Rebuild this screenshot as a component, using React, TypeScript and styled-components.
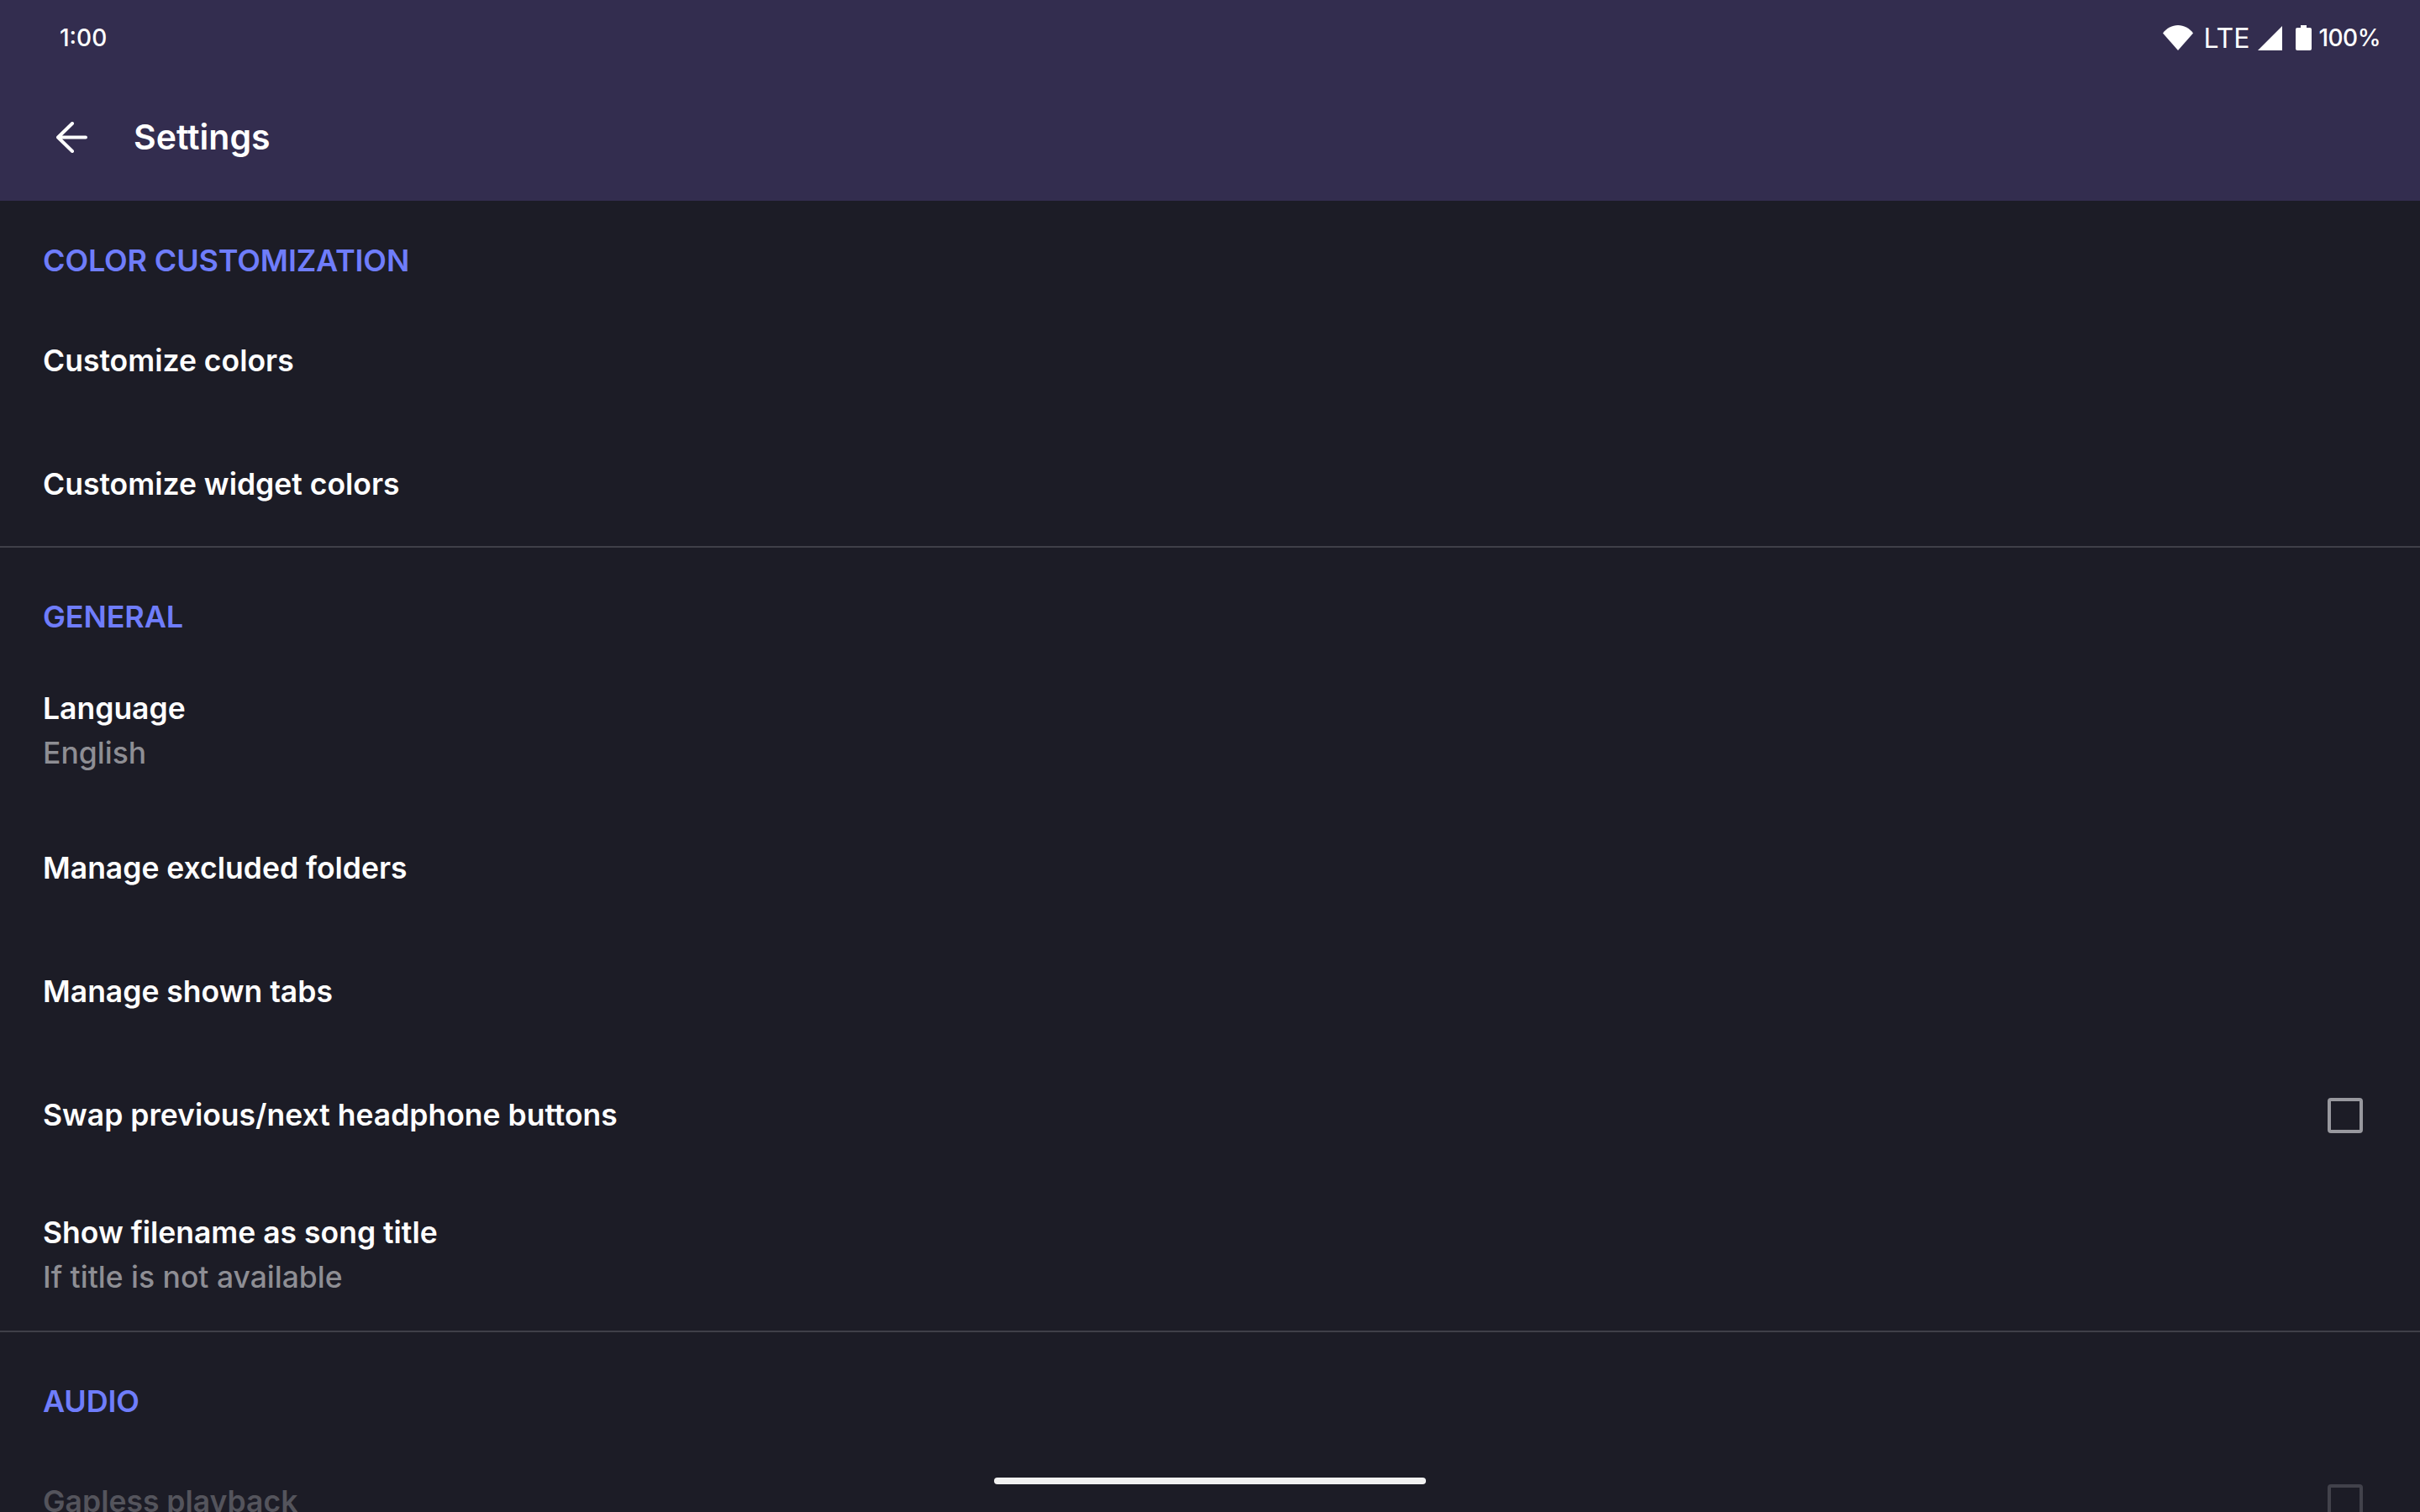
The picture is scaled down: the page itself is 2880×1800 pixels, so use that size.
import React from 'react';
import styled, { createGlobalStyle } from 'styled-components';

const GlobalStyle = createGlobalStyle`
  html, body {
    margin: 0;
    padding: 0;
    background: #1c1c26;
  }
`;

const Screen = styled.div`
  position: relative;
  width: 2880px;
  height: 1800px;
  overflow: hidden;
  background: #1c1c26;
  font-family: Inter, "Liberation Sans", sans-serif;
  color: #fff;
`;

const AppBar = styled.header`
  height: 239px;
  background: #332d4f;
`;

const StatusBar = styled.div`
  height: 90px;
  padding: 0 47px 0 71px;
  box-sizing: border-box;
  display: flex;
  align-items: center;
  justify-content: space-between;
  font-size: 28px;
  font-weight: 500;
`;

const StatusIcons = styled.div`
  display: flex;
  align-items: center;
`;

const Lte = styled.span`
  margin: 0 10px 0 13px;
  font-size: 32px;
  font-weight: 400;
`;

const Battery = styled.svg`
  margin: 0 8px 0 16px;
`;

const Percent = styled.span`
  letter-spacing: -0.5px;
`;

const Toolbar = styled.div`
  height: 146px;
  padding-left: 67px;
  display: flex;
  align-items: center;
  gap: 55px;
`;

const Title = styled.h1`
  margin: 0;
  font-size: 41px;
  font-weight: 600;
`;

const Section = styled.section<{ $divider?: boolean }>`
  border-bottom: ${(p) => (p.$divider ? '2px solid #3f3f48' : 'none')};
`;

const SectionTitle = styled.h2<{ $height: number; $bottom: number }>`
  margin: 0;
  height: ${(p) => p.$height}px;
  padding: 0 0 ${(p) => p.$bottom}px 51px;
  box-sizing: border-box;
  display: flex;
  align-items: flex-end;
  font-size: 36px;
  line-height: 36px;
  font-weight: 600;
  letter-spacing: -0.15px;
  color: #6f7dfb;
`;

const Row = styled.div`
  height: 147px;
  padding: 0 68px 0 51px;
  box-sizing: border-box;
  display: flex;
  align-items: center;
  justify-content: space-between;
`;

const TallRow = styled(Row)<{ $height: number }>`
  height: ${(p) => p.$height}px;
  padding-top: 3px;
`;

const Texts = styled.div`
  display: flex;
  flex-direction: column;
  gap: 9px;
`;

const RowTitle = styled.div<{ $disabled?: boolean }>`
  font-size: 35.5px;
  line-height: 44px;
  font-weight: 600;
  color: ${(p) => (p.$disabled ? '#54545c' : '#fff')};
`;

const RowSummary = styled.div`
  font-size: 35.5px;
  line-height: 44px;
  font-weight: 500;
  color: #8e8e94;
`;

const CheckBox = styled.span<{ $disabled?: boolean }>`
  width: 42px;
  height: 42px;
  border: 4px solid ${(p) => (p.$disabled ? '#42424b' : '#98989e')};
  border-radius: 4px;
  box-sizing: border-box;
`;

const HomeIndicator = styled.div`
  position: absolute;
  left: 1183px;
  top: 1759px;
  width: 514px;
  height: 8px;
  border-radius: 4px;
  background: #f1f1f1;
`;

const App: React.FC = () => (
  <Screen>
    <GlobalStyle />
    <AppBar>
      <StatusBar>
        <span>1:00</span>
        <StatusIcons>
          <svg width="36" height="30" viewBox="0 0 36 30" fill="#fff">
            <path d="M0 9.500C4.500 3.500 11 0 18 0s13.500 3.500 18 9.500L18 30z" />
          </svg>
          <Lte>LTE</Lte>
          <svg width="29" height="29" viewBox="0 0 29 29" fill="#fff">
            <path d="M29 0v29H0z" />
          </svg>
          <Battery width="19" height="30" viewBox="0 0 19 30" fill="#fff">
            <path d="M6 0h7v3h4a2 2 0 0 1 2 2v23a2 2 0 0 1-2 2H2a2 2 0 0 1-2-2V5a2 2 0 0 1 2-2h4z" />
          </Battery>
          <Percent>100%</Percent>
        </StatusIcons>
      </StatusBar>
      <Toolbar>
        <svg width="37" height="37" viewBox="0 0 37 37" fill="none" stroke="#fff" strokeWidth="4" strokeLinecap="round" strokeLinejoin="round">
          <path d="M35 18.500H2M19 2L2 18.500 19 35" />
        </svg>
        <Title>Settings</Title>
      </Toolbar>
    </AppBar>

    <Section $divider>
      <SectionTitle $height={117} $bottom={28}>COLOR CUSTOMIZATION</SectionTitle>
      <Row><RowTitle>Customize colors</RowTitle></Row>
      <Row><RowTitle>Customize widget colors</RowTitle></Row>
    </Section>

    <Section $divider>
      <SectionTitle $height={126} $bottom={26}>GENERAL</SectionTitle>
      <TallRow $height={182}>
        <Texts>
          <RowTitle>Language</RowTitle>
          <RowSummary>English</RowSummary>
        </Texts>
      </TallRow>
      <Row><RowTitle>Manage excluded folders</RowTitle></Row>
      <Row><RowTitle>Manage shown tabs</RowTitle></Row>
      <Row>
        <RowTitle>Swap previous/next headphone buttons</RowTitle>
        <CheckBox />
      </Row>
      <TallRow $height={183}>
        <Texts>
          <RowTitle>Show filename as song title</RowTitle>
          <RowSummary>If title is not available</RowSummary>
        </Texts>
      </TallRow>
    </Section>

    <Section>
      <SectionTitle $height={128} $bottom={28}>AUDIO</SectionTitle>
      <Row>
        <RowTitle $disabled>Gapless playback</RowTitle>
        <CheckBox $disabled />
      </Row>
    </Section>

    <HomeIndicator />
  </Screen>
);

export default App;
